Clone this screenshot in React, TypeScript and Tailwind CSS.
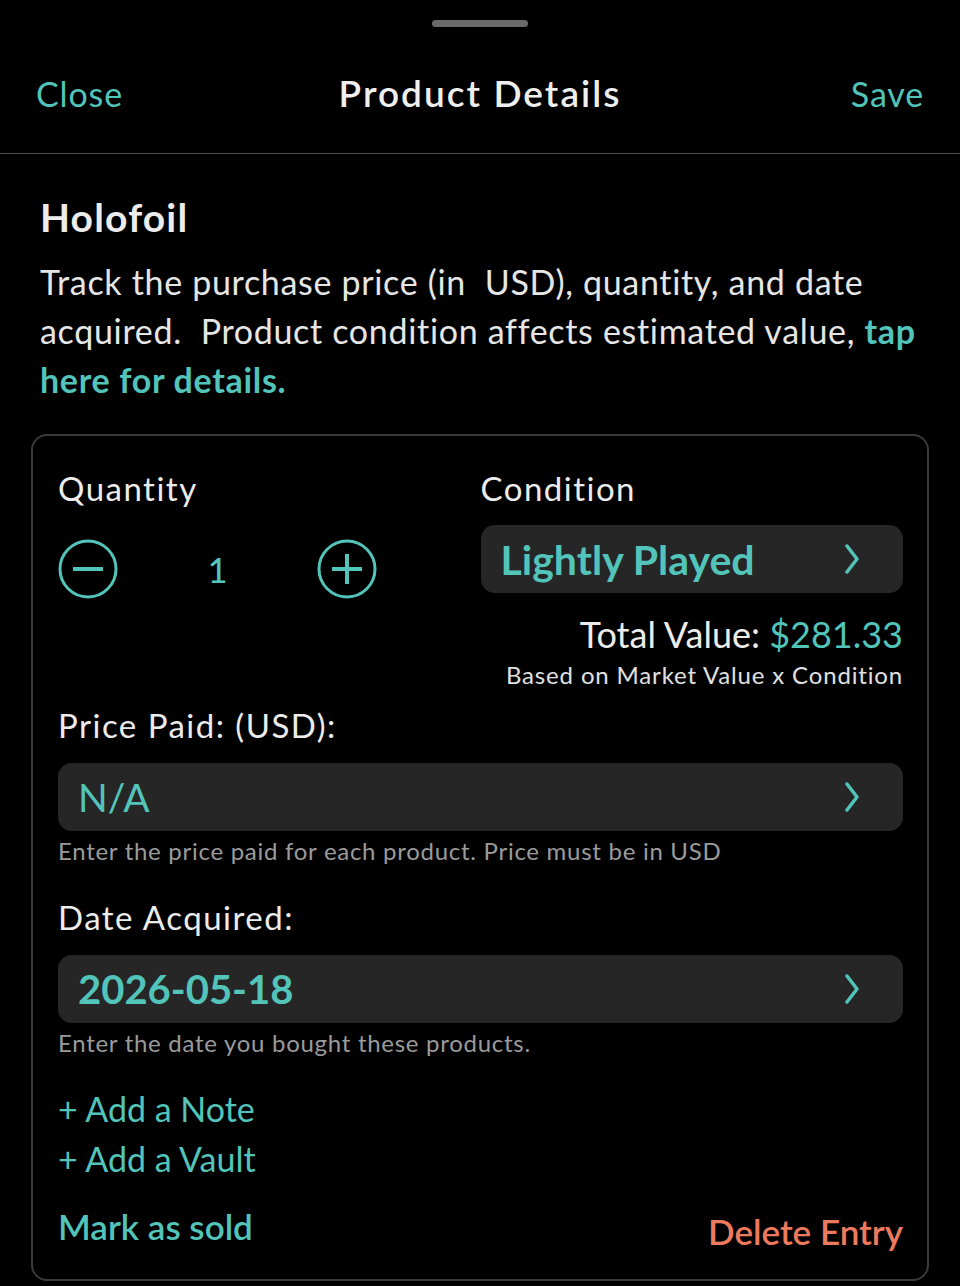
import React from "react";

const TEAL = "text-[#52c4b9]";

function Chevron() {
  return (
    <svg width="20" height="30" viewBox="0 0 20 30" fill="none">
      <polyline points="4,2 14,15 4,28" stroke="#52c4b9" strokeWidth="3.5" strokeLinecap="round" strokeLinejoin="round" />
    </svg>
  );
}

function CircleBtn({ plus }: { plus?: boolean }) {
  return (
    <svg width="60" height="60" viewBox="0 0 60 60" fill="none">
      <circle cx="30" cy="30" r="28" stroke="#52c4b9" strokeWidth="3" />
      <line x1="15" y1="30" x2="45" y2="30" stroke="#52c4b9" strokeWidth="4" />
      {plus && <line x1="30" y1="15" x2="30" y2="45" stroke="#52c4b9" strokeWidth="4" />}
    </svg>
  );
}

function PickerRow({ value, weight }: { value: string; weight: string }) {
  return (
    <div className="flex items-center justify-between h-[68px] rounded-[14px] bg-[#262626] pl-[20px] pr-[40px]">
      <span className={`${TEAL} leading-none ${weight}`}>{value}</span>
      <Chevron />
    </div>
  );
}

const LABEL = "text-[33px] leading-[40px] tracking-[0.045em]";
const HELP = "text-[24px] leading-[32px] tracking-[0.03em] text-[#9b9b9b]";

export default function App() {
  return (
    <div className="w-[960px] min-h-[1286px] bg-black text-[#ececec]" style={{ fontFamily: "Lato, 'Noto Sans', sans-serif" }}>
      <div className="h-[33px] pt-[20px] flex justify-center">
        <div className="w-[96px] h-[7px] rounded-full bg-[#6a6a6a]" />
      </div>
      <div className="h-[121px] grid grid-cols-[1fr_auto_1fr] items-center px-[36px] border-b border-[#4f4f4f]">
        <span className={`${TEAL} text-[34px] tracking-[0.025em]`}>Close</span>
        <span className="text-[37px] font-semibold tracking-[0.055em] text-[#efefef]">Product Details</span>
        <span className={`${TEAL} text-[34px] tracking-[0.025em] text-right`}>Save</span>
      </div>

      <div className="px-[31px]">
        <div className="px-[9px] pt-[41px]">
          <h1 className="text-[39px] font-bold leading-[44px] tracking-[0.03em]">Holofoil</h1>
          <p className="mt-[18px] text-[34px] leading-[49px] tracking-[0.02em] text-[#e6e6e6]">
            Track the purchase price (in&nbsp; USD), quantity, and date acquired.&nbsp; Product condition affects estimated value,{" "}
            <span className={`${TEAL} font-bold`}>tap here for details.</span>
          </p>
        </div>

        <div className="mt-[30px] border-2 border-[#3a3a3a] rounded-[16px] pl-[25px] pr-[24px] pt-[32px] pb-[31px]">
          <div className="grid grid-cols-2">
            <div>
              <div className={LABEL}>Quantity</div>
              <div className="mt-[31px] flex items-center">
                <CircleBtn />
                <span className={`${TEAL} w-[199px] text-center text-[34px] font-medium`}>1</span>
                <CircleBtn plus />
              </div>
            </div>
            <div>
              <div className={LABEL}>Condition</div>
              <div className="mt-[17px]">
                <PickerRow value="Lightly Played" weight="text-[41px] font-bold" />
              </div>
            </div>
          </div>

          <div className="mt-[15px] text-right">
            <div className="text-[36px] leading-[40px]">
              Total Value: <span className={TEAL}>$281.33</span>
            </div>
            <div className="mt-[4px] text-[24px] leading-[34px] tracking-[0.035em] text-[#e0e0e0]">
              Based on Market Value x Condition
            </div>
          </div>

          <div className={`mt-[13px] ${LABEL}`}>Price Paid: (USD):</div>
          <div className="mt-[18px]">
            <PickerRow value="N/A" weight="text-[39px] font-normal" />
          </div>
          <div className={`mt-[4px] ${HELP}`}>Enter the price paid for each product. Price must be in USD</div>

          <div className={`mt-[30px] ${LABEL}`}>Date Acquired:</div>
          <div className="mt-[18px]">
            <PickerRow value="2026-05-18" weight="text-[40px] font-bold" />
          </div>
          <div className={`mt-[4px] ${HELP}`}>Enter the date you bought these products.</div>

          <div className={`mt-[25px] ${TEAL} text-[34px] leading-[50px]`}>
            <div>+ Add a Note</div>
            <div>+ Add a Vault</div>
          </div>

          <div className="mt-[20px] flex items-end justify-between">
            <span className={`${TEAL} text-[35px] font-semibold leading-[44px]`}>Mark as sold</span>
            <span className="text-[#ee7a5e] text-[35px] font-semibold leading-[44px] translate-y-[5px]">Delete Entry</span>
          </div>
        </div>
      </div>
    </div>
  );
}
